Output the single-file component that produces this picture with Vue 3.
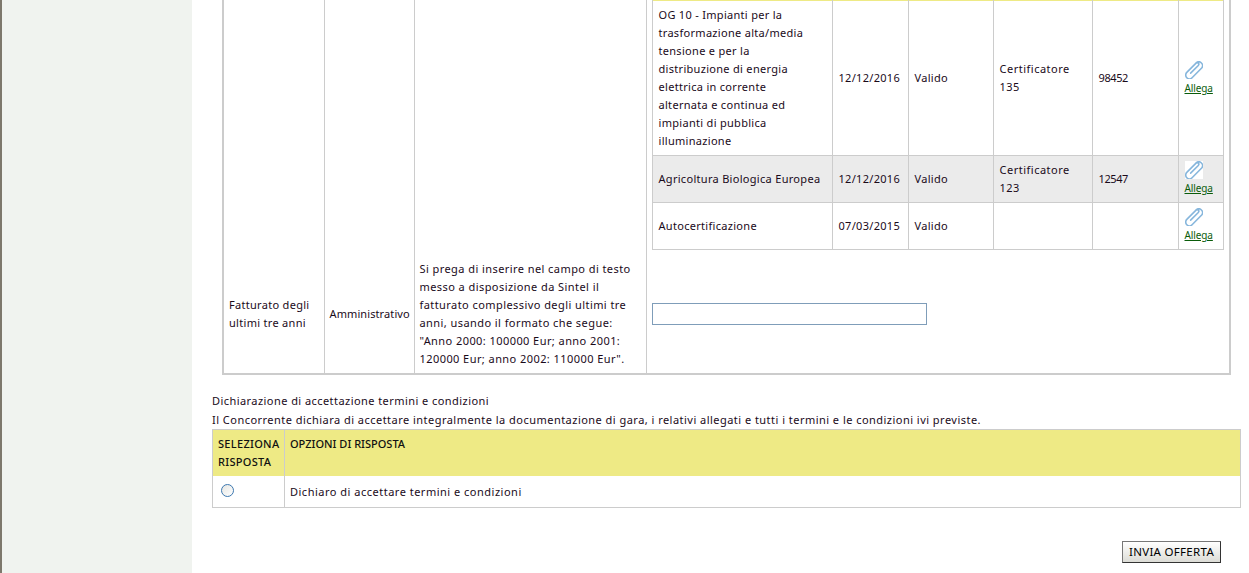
<script setup>
const certs = [
  { name: 'OG 10 - Impianti per la trasformazione alta/media tensione e per la distribuzione di energia elettrica in corrente alternata e continua ed impianti di pubblica illuminazione', date: '12/12/2016', state: 'Valido', by: 'Certificatore 135', code: '98452' },
  { name: 'Agricoltura Biologica Europea', date: '12/12/2016', state: 'Valido', by: 'Certificatore 123', code: '12547', alt: true },
  { name: 'Autocertificazione', date: '07/03/2015', state: 'Valido', by: '', code: '' }
]
</script>

<template>
  <div class="page">
    <aside class="side"></aside>
    <main class="main">
      <table class="outer">
        <colgroup>
          <col style="width: 101px" />
          <col style="width: 90px" />
          <col style="width: 232px" />
          <col />
        </colgroup>
        <tbody>
          <tr>
            <td class="top"></td>
            <td class="top"></td>
            <td class="top"></td>
            <td class="top nest">
              <table class="certs">
                <colgroup>
                  <col style="width: 180px" />
                  <col style="width: 76px" />
                  <col style="width: 85px" />
                  <col style="width: 99px" />
                  <col style="width: 86px" />
                  <col />
                </colgroup>
                <tbody>
                  <tr v-for="c in certs" :key="c.name" :class="{ alt: c.alt }">
                    <td class="name">{{ c.name }}</td>
                    <td>{{ c.date }}</td>
                    <td>{{ c.state }}</td>
                    <td class="by">{{ c.by }}</td>
                    <td class="code">{{ c.code }}</td>
                    <td class="attach">
                      <svg class="clip" viewBox="1.500 1.500 15 15" width="18" height="18">
                        <path d="M6.200 11.600 12.600 5.200a1.300 1.300 0 0 0-1.900-1.900L3 11a3.100 3.100 0 0 0 4.400 4.400L15.400 7.400a3.200 3.200 0 0 0-4.500-4.500" fill="none" stroke="#86b6dc" stroke-width="1.300" stroke-linecap="round" />
                      </svg>
                      <a href="#" class="link">Allega</a>
                    </td>
                  </tr>
                </tbody>
              </table>
            </td>
          </tr>
          <tr>
            <td>Fatturato degli ultimi tre anni</td>
            <td class="area">Amministrativo</td>
            <td class="note">Si prega di inserire nel campo di testo messo a disposizione da Sintel il fatturato complessivo degli ultimi tre anni, usando il formato che segue: "Anno 2000: 100000 Eur; anno 2001: 120000 Eur; anno 2002: 110000 Eur".</td>
            <td class="field"><input class="text-input" type="text" /></td>
          </tr>
        </tbody>
      </table>

      <p class="q-title">Dichiarazione di accettazione termini e condizioni</p>
      <p class="q-text">Il Concorrente dichiara di accettare integralmente la documentazione di gara, i relativi allegati e tutti i termini e le condizioni ivi previste.</p>
      <table class="answers">
        <thead>
          <tr>
            <th class="pick">SELEZIONA RISPOSTA</th>
            <th class="options">OPZIONI DI RISPOSTA</th>
          </tr>
        </thead>
        <tbody>
          <tr>
            <td class="pick"><span class="radio"></span></td>
            <td class="answer">Dichiaro di accettare termini e condizioni</td>
          </tr>
        </tbody>
      </table>
      <div class="actions">
        <button class="send" type="button">INVIA OFFERTA</button>
      </div>
    </main>
  </div>
</template>

<style>
html, body {
  margin: 0;
  background: #fff;
  overflow: hidden;
}
</style>

<style scoped>
.page {
  display: flex;
  height: 573px;
  overflow: hidden;
  font-family: "Noto Sans", sans-serif;
  font-size: 11px;
  letter-spacing: 0.3px;
  line-height: 18px;
  color: #1a0a1a;
}

.side {
  width: 190px;
  flex: none;
  background: #f0f3ef;
  border-left: 2px solid #7d786c;
}

.main {
  width: 1029px;
  margin: 0 0 0 20px;
}

table {
  border-collapse: collapse;
  table-layout: fixed;
}

/* Tabella esterna */
.outer {
  width: 1009px;
  margin-left: 10px;
  border: 2px solid #ccc;
  border-top: 0;
}

.outer td {
  border-left: 1px solid #ccc;
  padding: 5px;
  vertical-align: middle;
}

.outer td.top {
  padding: 0;
  height: 255px;
  vertical-align: top;
}

.outer td.nest {
  padding: 0 6px 0 5px;
}

.outer td.area {
  letter-spacing: 0.1px;
}

.outer td.note {
  letter-spacing: 0.43px;
}

/* Tabella certificazioni */
.certs {
  width: 572px;
  border-top: 1px solid #eeea85;
}

.certs td {
  border: 1px solid #ccc;
  border-top: 0;
  padding: 5px 5px 5px 6px;
}

.certs tr:first-child td {
  border-top: 0;
}

/* a capo come nell'originale */
.certs tr:first-child td.name {
  padding-right: 23px;
}

.certs tr:first-child td.attach {
  padding-top: 7px;
  padding-bottom: 5px;
}

.certs td.by {
  letter-spacing: 0.5px;
}

.certs td.code {
  letter-spacing: -0.4px;
}

.certs .alt td {
  background: #ebebeb;
  border-top-color: #ebebeb;
}

.attach {
  font-size: 10px;
  letter-spacing: -0.1px;
}

.clip {
  display: block;
  background: #fff;
}

.certs tr:not(.alt) .clip {
  background: none;
}

.link {
  display: block;
  color: #0a5c0a;
  text-decoration-thickness: 1px;
}

.text-input {
  display: block;
  box-sizing: border-box;
  width: 275px;
  height: 22px;
  margin: 0;
  padding: 0;
  border: 1px solid #7f9db9;
  background: #fff;
}

/* Dichiarazione */
.q-title {
  margin: 17px 0 0;
  letter-spacing: 0.44px;
}

.q-text {
  margin: 1px 0 0;
  letter-spacing: 0.47px;
}

.answers {
  width: 1029px;
  border: 1px solid #ccc;
}

.answers th,
.answers td {
  border-left: 1px solid #ccc;
  padding: 5px;
  text-align: left;
  vertical-align: middle;
}

.answers th {
  height: 36px;
  vertical-align: top;
  background: #eeea85;
  font-weight: 500;
  color: #111;
}

.answers th.options {
  letter-spacing: 0;
}

.answers td {
  height: 21px;
}

.answers td.answer {
  letter-spacing: 0.5px;
}

.pick {
  width: 61px;
}

.radio {
  display: block;
  box-sizing: border-box;
  width: 13px;
  height: 13px;
  margin: -2px 0 0 3px;
  border: 1.5px solid #3d78b0;
  border-radius: 50%;
  background: linear-gradient(135deg, #e6e6e2, #fff);
}

.actions {
  display: flex;
  justify-content: flex-end;
  padding: 33px 20px 0 0;
}

.send {
  box-sizing: border-box;
  width: 99px;
  height: 22px;
  padding: 0 0 2px;
  border: 1px solid;
  border-color: #777 #333 #333 #777;
  background: linear-gradient(#fff, #dcdcd6);
  font-family: inherit;
  font-size: 11.5px;
  letter-spacing: 0.3px;
  color: #000;
}
</style>
